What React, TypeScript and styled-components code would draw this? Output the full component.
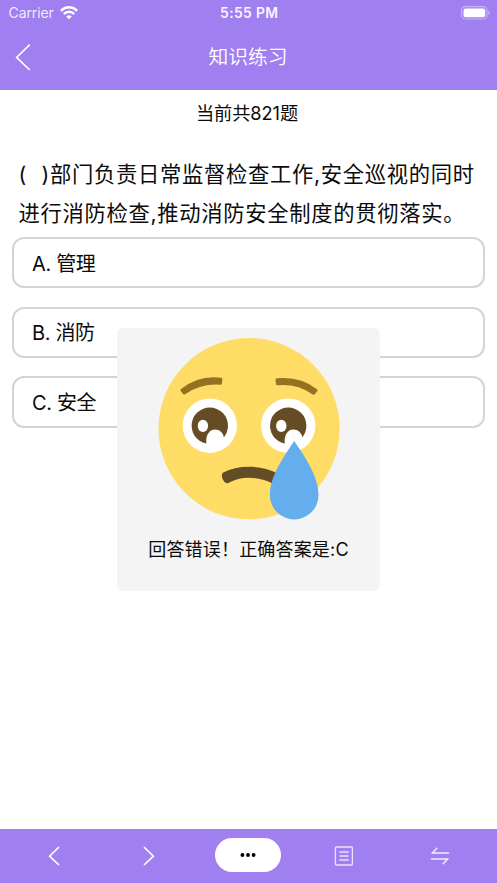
import React from 'react';
import styled, { createGlobalStyle } from 'styled-components';

const GlobalStyle = createGlobalStyle`
  * { box-sizing: border-box; }
  body { margin: 0; background: #fff; }
`;

const Screen = styled.div`
  position: relative;
  display: flex;
  flex-direction: column;
  width: 100%;
  height: 883px;
  overflow: hidden;
  background: #fff;
  color: #0b0b0b;
  font-family: Inter, 'Noto Sans CJK SC', sans-serif;
  white-space: nowrap;
`;

const Header = styled.header`
  flex: none;
  height: 90px;
  background: #a07ff0;
  color: #fff;
`;

const StatusBar = styled.div`
  display: grid;
  grid-template-columns: 1fr auto 1fr;
  align-items: center;
  height: 26px;
  padding: 0 7px 0 8.5px;
`;

const Carrier = styled.div`
  display: flex;
  align-items: center;
  gap: 6px;
  margin-bottom: 1px;
  font-size: 14px;
  letter-spacing: -0.1px;
  color: #f0eafd;
`;

const Clock = styled.div`
  font-size: 13.8px;
  font-weight: 600;
  letter-spacing: 0.4px;
  color: #f8f5ff;
`;

const Battery = styled.div`
  display: flex;
  justify-content: flex-end;
  svg { display: block; }
`;

const TitleBar = styled.div`
  display: grid;
  grid-template-columns: 48px 1fr 48px;
  align-items: center;
  height: 61px;
  svg { display: block; margin-left: 15px; }
`;

const Title = styled.h1`
  margin: 0 1px 0 0;
  text-align: center;
  font-size: 19.8px;
  font-weight: 350;
  line-height: 28px;
`;

const Content = styled.main`
  flex: 1;
  padding: 0 12px;
`;

const Total = styled.div`
  margin: 9px 3px 0 0;
  height: 28px;
  text-align: center;
  font-size: 18.2px;
  letter-spacing: -0.05px;
  line-height: 28px;
`;

const Question = styled.p`
  margin: 28px 0 0;
  padding-left: 6.5px;
  font-size: 21.3px;
  line-height: 38.5px;
  letter-spacing: 0.7px;
`;

const Line = styled.span`
  display: block;
`;

const Blank = styled.span`
  display: inline-flex;
  justify-content: space-between;
  width: 31.5px;
`;

const Options = styled.div`
  display: flex;
  flex-direction: column;
  gap: 18.4px;
  margin-top: 5px;
`;

const Option = styled.div`
  display: flex;
  align-items: center;
  height: 51.3px;
  padding: 0 0 1px 18px;
  border: 2px solid #d4d4d4;
  border-radius: 12px;
  font-size: 20px;
  letter-spacing: -0.35px;
`;

const Toast = styled.div`
  position: absolute;
  left: 117px;
  top: 328px;
  display: flex;
  flex-direction: column;
  align-items: center;
  width: 263px;
  height: 263px;
  padding-top: 10px;
  border-radius: 6px;
  background: #f4f4f4;
  svg { display: block; }
`;

const Message = styled.div`
  margin-top: 16px;
  font-size: 18px;
  line-height: 28px;
  letter-spacing: 0.18px;
`;

const TabBar = styled.nav`
  display: grid;
  flex: none;
  grid-template-columns: 108px 82px 1fr 78px 114px;
  align-items: center;
  justify-items: center;
  height: 54px;
  background: #a07ff0;
  svg { display: block; }
`;

const More = styled.div`
  display: flex;
  align-items: center;
  justify-content: center;
  width: 66px;
  height: 34px;
  margin-bottom: 2px;
  border-radius: 17px;
  background: #fff;
`;

const WifiIcon = () => (
  <svg width="18" height="14" viewBox="0 0 18 14" fill="none" stroke="#fff">
    <path d="M.9 4.8C5.4.2 12.6.2 17.1 4.8" strokeWidth="2.5" />
    <path d="M3.8 8C6.7 5 11.3 5 14.2 8" strokeWidth="2.4" />
    <path d="M9 13.2 6.2 10.5Q9 8.2 11.8 10.5Z" fill="#fff" stroke="none" />
  </svg>
);

const BatteryIcon = () => (
  <svg width="29" height="14" viewBox="0 0 29 14">
    <rect x=".6" y=".6" width="25.4" height="12.4" rx="3.6" fill="none" stroke="#c8b5f7" strokeWidth="1.1" />
    <rect x="2.5" y="2.4" width="21.7" height="8.8" rx="2" fill="#fff" />
    <path d="M27.2 4.7q1.6.7 1.6 2.1t-1.6 2.1z" fill="#c8b5f7" />
  </svg>
);

const Eye = ({ x }: { x: number }) => (
  <g transform={`translate(${x} 100.7)`}>
    <circle r="27.2" fill="#fff" />
    <circle r="18.2" fill="#644c25" />
    <ellipse cx="-6.9" cy="0.2" rx="5.2" ry="6.1" fill="#fff" />
    <path d="M-3.2 19C-5 10 -.5 3.8 5 3.8C10 3.8 13.4 7.2 14 11.6L12 19Z" fill="#fff" />
  </g>
);

const Face = () => (
  <svg width="182" height="182" viewBox="8.2 13 182 182">
    <circle cx="99.3" cy="103.7" r="90.6" fill="#ffdc65" />
    <g fill="#937322" stroke="#937322" strokeWidth="3" strokeLinejoin="round">
      <path d="M32.2 65.2Q49 51.5 71.1 54.2L70.7 58.2Q50 57 34.5 68Z" />
      <path d="M127.2 54.8Q150 52.5 166.2 65.4L163.8 68.2Q148 57 127.7 58.8Z" />
    </g>
    <Eye x={60} />
    <Eye x={138.4} />
    <path d="M73.5 147.5C88 140 110 139.5 128 148.5Q126 157 122.5 158.2C107 151 91 151 78.5 158C74.5 160 69.5 149.7 73.5 147.5Z" fill="#644c25" />
    <path d="M144.4 116C136 129 120.1 150 120.1 170.1A24.3 24.3 0 0 0 168.7 170.1C168.7 150 153 129 144.4 116Z" fill="#64aeed" />
  </svg>
);

const options = ['A. 管理', 'B. 消防', 'C. 安全'];

export default function App() {
  return (
    <Screen>
      <GlobalStyle />
      <Header>
        <StatusBar>
          <Carrier>Carrier <WifiIcon /></Carrier>
          <Clock>5:55 PM</Clock>
          <Battery><BatteryIcon /></Battery>
        </StatusBar>
        <TitleBar>
          <svg width="16" height="28" viewBox="0 0 16 28" fill="none" stroke="#fff" strokeWidth="1.6">
            <path d="M14.8 1.6 1.6 14.4 14.8 27" />
          </svg>
          <Title>知识练习</Title>
        </TitleBar>
      </Header>
      <Content>
        <Total>当前共821题</Total>
        <Question>
          <Line><Blank><span>(</span><span>)</span></Blank>部门负责日常监督检查工作,安全巡视的同时</Line>
          <Line>进行消防检查,推动消防安全制度的贯彻落实。</Line>
        </Question>
        <Options>
          {options.map((label) => <Option key={label}>{label}</Option>)}
        </Options>
      </Content>
      <TabBar>
        <svg width="12" height="20" viewBox="0 0 12 20" fill="none" stroke="#fff" strokeWidth="1.6">
          <path d="M11 1 1.6 10.2 11 19" />
        </svg>
        <svg width="12" height="20" viewBox="0 0 12 20" fill="none" stroke="#fff" strokeWidth="1.6">
          <path d="M1 1 10.4 10.2 1 19" />
        </svg>
        <More>
          <svg width="16" height="4" viewBox="0 0 16 4" fill="#000">
            <circle cx="2.4" cy="2" r="1.9" /><circle cx="8" cy="2" r="1.9" /><circle cx="13.6" cy="2" r="1.9" />
          </svg>
        </More>
        <svg width="20" height="20" viewBox="0 0 20 20" fill="none" stroke="#eae2fc" strokeWidth="1.3">
          <rect x="1.4" y="1" width="17" height="18" rx="1" />
          <path d="M5.4 6H14.6M5.4 10H14.6M5.4 14H14.6" strokeWidth="1.5" />
        </svg>
        <svg width="18" height="18" viewBox="0 0 18 18" fill="none" stroke="#f1ebfd" strokeWidth="1.4">
          <path d="M6.2 .8 1.4 6H18M0 12H16.5L11.8 17.2" />
        </svg>
      </TabBar>
      <Toast>
        <Face />
        <Message>回答错误！正确答案是:C</Message>
      </Toast>
    </Screen>
  );
}
